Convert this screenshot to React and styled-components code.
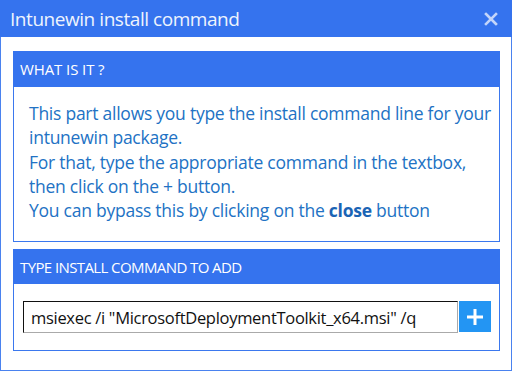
import React from "react";
import styled, { createGlobalStyle } from "styled-components";

const GlobalStyle = createGlobalStyle`
  html, body {
    margin: 0;
    padding: 0;
    background: #ffffff;
  }
  body {
    font-family: "Open Sans", "Noto Sans", sans-serif;
  }
`;

const Window = styled.div`
  width: 512px;
  height: 371px;
  box-sizing: border-box;
  border: 1px solid #4a82ef;
  border-top: none;
  background: #ffffff;
  display: flex;
  flex-direction: column;
`;

const TitleBar = styled.div`
  height: 37px;
  margin: 0 -1px;
  background: #3573ee;
  display: flex;
  align-items: center;
  justify-content: space-between;
  padding: 0 14px 0 10px;
  box-sizing: border-box;
`;

const Title = styled.span`
  color: #eef3fd;
  font-size: 19px;
  letter-spacing: -0.45px;
`;

const CloseButton = styled.span`
  width: 14px;
  height: 14px;
  display: flex;
`;

const Content = styled.div`
  padding: 14px 11px 0 12px;
  display: flex;
  flex-direction: column;
  gap: 7px;
`;

const Section = styled.div`
  border: 1px solid #3b78ee;
  display: flex;
  flex-direction: column;
`;

const SectionHeader = styled.div`
  height: ${p => p.h}px;
  background: #3573ee;
  color: #ffffff;
  font-size: 15px;
  letter-spacing: ${p => p.ls}px;
  display: flex;
  align-items: center;
  padding-left: 7px;
  margin: -1px -1px 0;
`;

const Body = styled.div`
  padding: 14px 6px 19px 15px;
  color: #2272c4;
  font-size: 17.5px;
  line-height: 24.25px;
  letter-spacing: -0.25px;
  white-space: nowrap;
`;

const Strong = styled.strong`
  font-weight: 700;
  color: #1b64b5;
`;

const InputRow = styled.div`
  display: flex;
  padding: 17px 8px 17px 9px;
`;

const CommandInput = styled.input`
  flex: 1;
  height: 32px;
  box-sizing: border-box;
  border: 1px solid #111111;
  border-right-color: #aaaaaa;
  border-bottom-color: #aaaaaa;
  padding: 0 7px;
  font-family: "Open Sans", "Noto Sans", sans-serif;
  font-size: 16.5px;
  letter-spacing: -0.3px;
  color: #111111;
  outline: none;
  min-width: 0;
`;

const AddButton = styled.button`
  width: 32px;
  height: 31px;
  border: none;
  background: #2395f3;
  display: flex;
  align-items: center;
  justify-content: center;
  padding: 0;
  margin-left: 1px;
`;

export default function App() {
  return (
    <>
      <GlobalStyle />
      <Window>
        <TitleBar>
          <Title>Intunewin install command</Title>
          <CloseButton>
            <svg width="14" height="14" viewBox="0 0 14 14">
              <path d="M2 2 L12 12 M12 2 L2 12" stroke="#c3d5fa" strokeWidth="2.6" strokeLinecap="square" />
            </svg>
          </CloseButton>
        </TitleBar>
        <Content>
          <Section>
            <SectionHeader h={36} ls={-0.1}>WHAT IS IT ?</SectionHeader>
            <Body>
              This part allows you type the install command line for your
              <br />
              intunewin package.
              <br />
              For that, type the appropriate command in the textbox,
              <br />
              then click on the + button.
              <br />
              You can bypass this by clicking on the <Strong>close</Strong> button
            </Body>
          </Section>
          <Section>
            <SectionHeader h={35} ls={-0.6}>TYPE INSTALL COMMAND TO ADD</SectionHeader>
            <InputRow>
              <CommandInput defaultValue={'msiexec /i "MicrosoftDeploymentToolkit_x64.msi" /q'} />
              <AddButton>
                <svg width="20" height="20" viewBox="0 0 20 20">
                  <path d="M10 2 V18 M2 10 H18" stroke="#ffffff" strokeWidth="3" />
                </svg>
              </AddButton>
            </InputRow>
          </Section>
        </Content>
      </Window>
    </>
  );
}
